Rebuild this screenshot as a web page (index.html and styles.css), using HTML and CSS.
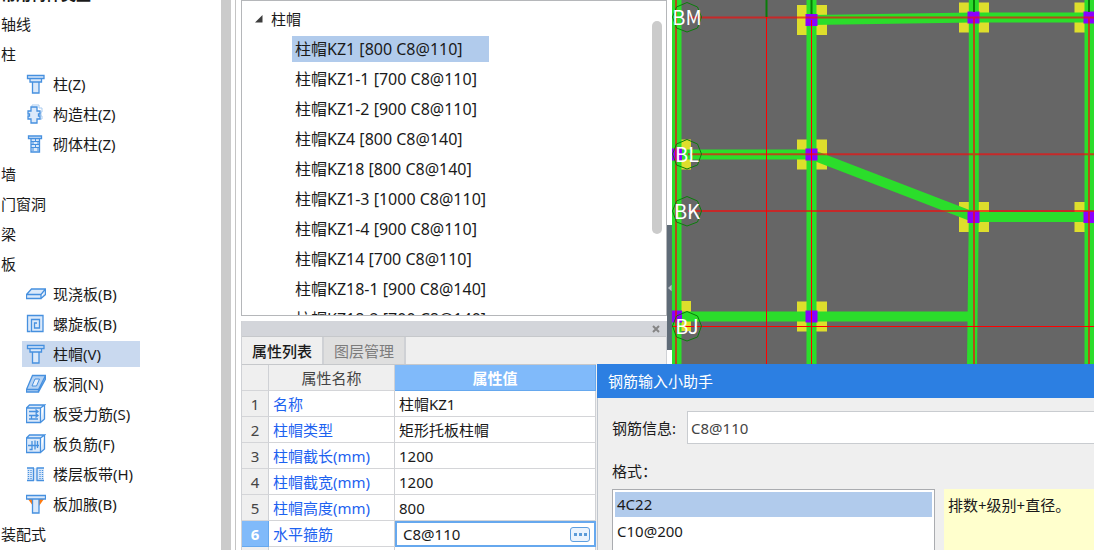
FILE: index.html
```html
<!DOCTYPE html>
<html lang="zh-CN">
<head>
<meta charset="utf-8">
<meta name="viewport" content="width=device-width, initial-scale=1">
<title>柱帽</title>
<link rel="stylesheet" href="styles.css">
</head>
<body>
<svg class="defs" aria-hidden="true">
  <symbol id="i-column" viewBox="0 0 20 20">
    <path class="tint line" d="M1.500 1.500h16.500v3H1.500zM4 4.500h11.500v3.500H4zM6.500 8h6.500v11H6.500z"/>
  </symbol>
  <symbol id="i-struct" viewBox="0 0 20 20">
    <path class="soft" d="M6 2.500V1h7v3h3v4h-1v4h1v3h-2"/>
    <path class="tint line" d="M5 3h6v4h3v3h-1.500v2H14v3h-3v4H5v-4H2v-3h1.500v-2H2V7h3z"/>
  </symbol>
  <symbol id="i-brick" viewBox="0 0 20 20">
    <path class="tint line" d="M2.500 2h13v2.500H2.500zM5 4.500h8.500v13.500H5z"/>
    <path class="line thin" d="M5 7.500h9M5 10.500h9M5 13.500h9M9.500 5v2M12 8v2M7 8v2M9.500 11v2M12 14v3M7 14v3"/>
  </symbol>
  <symbol id="i-slab" viewBox="0 0 20 20">
    <path class="tint line" d="M.5 10.500l5-5.500h14l-4.500 5.500zM.5 10.500v4H15v-4M15 14.500l4.500-4V5"/>
  </symbol>
  <symbol id="i-spiral" viewBox="0 0 20 20">
    <path class="tint" d="M2 2h15v15H2z"/>
    <path class="line" d="M4.500 17.500H1.500v-16h15.500v16H5.500V5.500h8v8.500h-5V9H11"/>
  </symbol>
  <symbol id="i-hole" viewBox="0 0 20 20">
    <path class="fill line" d="M6.500 1.500h13L12.500 15.500H.5zM.5 15.500v2.500h12v-2.500M12.500 18l7-13V1.500"/>
    <path class="hole" d="M9 5h4.500l-3 7H6z"/>
  </symbol>
  <symbol id="i-rebar" viewBox="0 0 20 20">
    <path class="tint line" d="M.5 4h14v14.500H.5zM.5 4l3-3h15l-4 3M18.500 1v14l-4 3.500"/>
    <path class="line" d="M3 7.500h9M3 11.500h9M3 15h9M9.500 5.500l2.500 2-2.500 2M9.500 9.500l2.500 2-2.500 2M5.500 11.500V15"/>
  </symbol>
  <symbol id="i-neg" viewBox="0 0 20 20">
    <path class="tint line" d="M.5 4h14v14.500H.5zM.5 4l3-3h15l-4 3M18.500 1v14l-4 3.500"/>
    <path class="line" d="M2 11.500h11M6 7v8.500H3.500M9 6.500v9M11.500 7v7"/>
  </symbol>
  <symbol id="i-band" viewBox="0 0 20 20">
    <path class="tint" d="M1 4h17v13H1z"/>
    <path class="line" d="M1 4h7M1 16.500h7M10.500 4H18M10.500 16.500H18M7.500 4v12.500M11 4v12.500"/>
    <path class="line dots" d="M2.500 6v9M5 6v9M14 6v9M16.500 6v9"/>
  </symbol>
  <symbol id="i-haunch" viewBox="0 0 20 20">
    <path class="orange" d="M2 5h16l-5 7H7z"/>
    <path class="tint line" d="M.5 1.500h19v3.500H.5zM6.500 5h6.500v14H6.500z"/>
  </symbol>
</svg>

<div class="app">
  <nav class="nav" aria-label="构件类型">
    <ul class="nav-list">
      <li class="group strong">常用构件类型</li>
      <li class="group">轴线</li>
      <li class="group">柱</li>
      <li><button class="item"><svg class="icon"><use href="#i-column"/></svg>柱(Z)</button></li>
      <li><button class="item"><svg class="icon"><use href="#i-struct"/></svg>构造柱(Z)</button></li>
      <li><button class="item"><svg class="icon"><use href="#i-brick"/></svg>砌体柱(Z)</button></li>
      <li class="group">墙</li>
      <li class="group">门窗洞</li>
      <li class="group">梁</li>
      <li class="group">板</li>
      <li><button class="item"><svg class="icon"><use href="#i-slab"/></svg>现浇板(B)</button></li>
      <li><button class="item"><svg class="icon"><use href="#i-spiral"/></svg>螺旋板(B)</button></li>
      <li><button class="item selected" aria-current="true"><svg class="icon"><use href="#i-column"/></svg>柱帽(V)</button></li>
      <li><button class="item"><svg class="icon"><use href="#i-hole"/></svg>板洞(N)</button></li>
      <li><button class="item"><svg class="icon"><use href="#i-rebar"/></svg>板受力筋(S)</button></li>
      <li><button class="item"><svg class="icon"><use href="#i-neg"/></svg>板负筋(F)</button></li>
      <li><button class="item"><svg class="icon"><use href="#i-band"/></svg>楼层板带(H)</button></li>
      <li><button class="item"><svg class="icon"><use href="#i-haunch"/></svg>板加腋(B)</button></li>
      <li class="group">装配式</li>
    </ul>
  </nav>
  <div class="nav-scroll"></div>

  <div class="middle">
    <section class="tree">
      <div class="tree-body">
        <button class="tree-root"><svg class="caret" viewBox="0 0 8 8"><path d="M7.500 0v7.500H0z"/></svg>柱帽</button>
        <ul class="tree-list">
          <li><button class="leaf selected">柱帽KZ1 [800 C8@110]</button></li>
          <li><button class="leaf">柱帽KZ1-1 [700 C8@110]</button></li>
          <li><button class="leaf">柱帽KZ1-2 [900 C8@110]</button></li>
          <li><button class="leaf">柱帽KZ4 [800 C8@140]</button></li>
          <li><button class="leaf">柱帽KZ18 [800 C8@140]</button></li>
          <li><button class="leaf">柱帽KZ1-3 [1000 C8@110]</button></li>
          <li><button class="leaf">柱帽KZ1-4 [900 C8@110]</button></li>
          <li><button class="leaf">柱帽KZ14 [700 C8@110]</button></li>
          <li><button class="leaf">柱帽KZ18-1 [900 C8@140]</button></li>
          <li><button class="leaf">柱帽KZ18-2 [700 C8@140]</button></li>
        </ul>
      </div>
      <div class="tree-scroll"><div class="thumb"></div></div>
    </section>

    <section class="props">
      <div class="props-bar">
        <button class="close" aria-label="关闭"><svg viewBox="0 0 8 8"><path d="M1 1l6 6M7 1L1 7"/></svg></button>
      </div>
      <div class="tabs" role="tablist">
        <button class="tab active" role="tab" aria-selected="true">属性列表</button>
        <button class="tab" role="tab" aria-selected="false">图层管理</button>
      </div>
      <table class="grid">
        <colgroup><col class="c-no"><col class="c-name"><col class="c-value"></colgroup>
        <thead><tr><th></th><th>属性名称</th><th class="on">属性值</th></tr></thead>
        <tbody>
          <tr><th>1</th><td class="name">名称</td><td>柱帽KZ1</td></tr>
          <tr><th>2</th><td class="name">柱帽类型</td><td>矩形托板柱帽</td></tr>
          <tr><th>3</th><td class="name">柱帽截长(mm)</td><td>1200</td></tr>
          <tr><th>4</th><td class="name">柱帽截宽(mm)</td><td>1200</td></tr>
          <tr><th>5</th><td class="name">柱帽高度(mm)</td><td>800</td></tr>
          <tr><th class="on">6</th><td class="name"><label for="stirrup">水平箍筋</label></td>
            <td class="edit"><div class="editor"><input id="stirrup" value="C8@110"><button class="more" aria-label="更多"><i></i><i></i><i></i></button></div></td></tr>
          <tr><th></th><td></td><td></td></tr>
        </tbody>
      </table>
    </section>
  </div>

  <div class="splitter"><button class="handle" aria-label="折叠"><svg viewBox="0 0 5 8"><path d="M4.500 0v8L0 4z"/></svg></button></div>

  <main class="canvas">
    <svg class="plan" role="img" aria-label="结构平面图">
      <g transform="translate(-672 0)">
        <g class="pads">
          <path d="M797 5h30v30h-30zM959 2.500h30v30h-30zM1074.500 2.500h30v30h-30zM797 139.500h30v30h-30zM959 202h30v30h-30zM1074.500 202h30v30h-30zM797 301.500h30v30h-30zM661 139.500h30v30h-30zM661 301h30v30h-30z"/>
        </g>
        <g class="beams">
          <path d="M676.500 0V364M811.500 0V364M973.800 0V217L972 364M1089.500 0V364"/>
          <path d="M811.500 20L973.500 17.500H1104M676 154.500H811.500L973.500 217H1104M676 316.500H970"/>
        </g>
        <g class="blocks">
          <path d="M805.500 14h12v12h-12zM967.500 11.500h12v12h-12zM1083.500 11.500h12v12h-12zM805.500 148.500h12v12h-12zM967.500 211h12v12h-12zM1083.500 211h12v12h-12zM805.500 310.500h12v12h-12zM670 148.500h12v12h-12zM670 310.500h12v12h-12z"/>
        </g>
        <g class="axis-soft">
          <path d="M676 0V364M974 17V364M1089 17V364M688 17.500H2400M688 154.300H2400M688 211H2400"/>
        </g>
        <g class="axis"><path d="M766.500 17V364M811.500 20V364M672 326.500H2400"/></g>
        <g class="axis-end"><path d="M766.500 0V17M811.500 0V14M974 0V12M1089 0V12"/></g>
        <g class="bubbles">
          <path id="bubble" d="M687 2.500L697.500 7L701.500 17L697.500 28L687 32L676.500 28L672.500 17L676.500 7z"/>
          <use href="#bubble" y="137"/><use href="#bubble" y="194"/><use href="#bubble" y="309"/>
        </g>
        <g class="marks">
          <text x="687" y="25">BM</text><text x="687" y="162">BL</text><text x="687" y="219">BK</text><text x="687" y="334">BJ</text>
        </g>
      </g>
    </svg>
  </main>

  <section class="dialog" role="dialog" aria-labelledby="dlg-title">
    <h2 class="dialog-title" id="dlg-title">钢筋输入小助手</h2>
    <div class="dialog-body">
      <div class="field"><label for="rebar">钢筋信息:</label><input id="rebar" value="C8@110"></div>
      <div class="format" id="fmt">格式：</div>
      <div class="choices">
        <ul class="options" role="listbox" aria-labelledby="fmt">
          <li class="option selected" role="option" aria-selected="true">4C22</li>
          <li class="option" role="option" aria-selected="false">C10@200</li>
        </ul>
        <div class="hint">排数+级别+直径。</div>
      </div>
    </div>
  </section>
</div>
</body>
</html>
```
FILE: styles.css
```css
* { box-sizing: border-box; }
html, body { height: 100%; }
body {
  margin: 0;
  overflow: hidden;
  background: #fff;
  color: #1a1a1a;
  font: 15px/20px "Noto Sans", "Noto Sans CJK SC", sans-serif;
}
button, input { font: inherit; color: inherit; margin: 0; padding: 0; border: 0; background: none; }
button { text-align: left; white-space: nowrap; }
ul { list-style: none; margin: 0; padding: 0; }
.defs { position: absolute; width: 0; height: 0; }

.app {
  position: relative;
  display: grid;
  grid-template-columns: 221px 10px 436px 5px minmax(0, 1fr);
  height: 100%;
  overflow: hidden;
}

/* component navigation */
.nav { overflow: hidden; }
.nav-list { margin-top: -21px; }
.nav-list li { height: 30px; padding: 2px 0 2px 22px; }
.nav-list .group { padding: 5px 0 5px 1px; }
.nav-list .strong { font-weight: 700; }
.item { display: flex; align-items: center; gap: 7px; width: 118px; height: 26px; padding-left: 4px; }
.nav .selected { background: #c9d9ef; }
.icon { width: 20px; height: 20px; }
.tint { fill: #dbe9fa; }
.line { stroke: #4690df; stroke-width: 1.3; }
.line:not(.tint):not(.fill) { fill: none; }
.thin { stroke-width: 1; }
.fill { fill: #b5d2f3; }
.soft { fill: none; stroke: #a9cbf0; }
.hole { fill: #e8f1fc; stroke: #4690df; }
.dots { stroke-dasharray: 1 1; }
.orange { fill: #ff7a0f; }
.nav-scroll { background: #cbcbcb; }

/* middle column */
.middle {
  display: grid;
  grid-template-rows: 316px minmax(0, 1fr);
  row-gap: 5px;
  min-height: 0;
  margin-left: 4px;
  padding-left: 5px;
  border-left: 1px solid #c4c4c4;
}
.tree { display: flex; border: 1px solid #b5b7ba; overflow: hidden; }
.tree-body { flex: 1; padding-top: 3px; }
.tree-root { display: flex; align-items: center; gap: 8px; height: 30px; padding-left: 13px; }
.caret { width: 8px; height: 8px; fill: #3d3d3d; }
.tree-list { padding-left: 50px; }
.tree-list li { height: 30px; padding: 2px 0; }
.leaf { display: block; width: 197px; height: 26px; padding-left: 3px; font-size: 16px; }
.tree .selected { background: #b1cbec; }
.tree-scroll { width: 14px; padding-top: 20px; }
.thumb { width: 10px; height: 213px; border-radius: 5px; background: #cbcbcb; }

.props { background: #efefef; border-left: 1px solid #cfd1d5; border-right: 1px solid #cfd1d5; overflow: hidden; }
.props-bar { display: flex; justify-content: flex-end; align-items: center; height: 16px; padding-right: 6px; background: #d3d5da; border-bottom: 1px solid #c6c8cb; }
.close { display: flex; }
.close svg { width: 8px; height: 8px; stroke: #858585; stroke-width: 2; }
.tabs { display: flex; height: 27px; }
.tab { padding: 0 10px; background: #dfdfdf; border-right: 2px solid #cfd1d5; color: #7c7c7c; }
.tab.active { background: #efefef; color: #1a1a1a; font-weight: 500; }

.grid { width: 354px; table-layout: fixed; border-collapse: separate; border-spacing: 0; background: #fff; border-top: 1px solid #c6c8cb; }
.c-no { width: 27px; }
.c-name { width: 126px; }
.c-value { width: 201px; }
.grid th, .grid td { height: 26px; padding: 0 4px; border-right: 1px solid #cfd1d5; border-bottom: 1px solid #d4d5d8; text-align: left; font-weight: 400; white-space: nowrap; }
.grid th { padding: 0; background: #efefef; color: #444; text-align: center; }
.grid .on { background: #80bafa; color: #fff; font-weight: 700; border-color: #66a8ee; }
.grid .name { color: #1d62f0; }
.grid .edit { padding: 0; border: 2px solid #66a8ee; }
.editor { display: flex; align-items: center; padding: 0 4px 0 6px; }
.editor input { flex: 1; min-width: 0; height: 22px; outline: 0; }
.more { display: flex; align-items: center; justify-content: center; gap: 2px; width: 20px; height: 15px; border: 1px solid #5e9fe0; border-radius: 3px; background: #eaf3fd; }
.more i { width: 3px; height: 3px; background: #5b9bd8; }

/* panel splitter */
.splitter { padding-top: 225px; }
.handle { display: flex; align-items: center; justify-content: flex-end; width: 5px; height: 125px; background: #5f6b77; }
.handle svg { width: 4px; height: 8px; fill: #b9c0c6; }

/* structural plan */
.canvas { min-width: 0; min-height: 0; background: #666; overflow: hidden; }
.plan { display: block; width: 100%; height: 100%; }
.pads { fill: #dede2c; }
.beams { fill: none; stroke: #2bdd2b; stroke-width: 10; }
.blocks { fill: #8b00ff; }
.axis-soft { stroke: #f01010; stroke-opacity: .7; stroke-width: 2; }
.axis { stroke: #f00; }
.axis-end { stroke: #087d08; stroke-width: 2; }
.bubbles { fill: none; stroke: #0b7d0b; }
.marks { fill: #fff; font: 400 20px "Noto Sans CJK SC", sans-serif; text-anchor: middle; }

/* floating input helper */
.dialog { position: absolute; left: 597px; right: 0; top: 364px; bottom: 0; display: flex; flex-direction: column; background: #efefef; border-left: 1px solid #c0c6ce; }
.dialog-title { margin: 0 0 0 -1px; padding: 7px 11px; height: 34px; background: #2c7fe2; color: #fff; font-size: 15px; font-weight: 400; }
.dialog-body { flex: 1; display: flex; flex-direction: column; min-height: 0; padding: 13px 0 0 14px; }
.field { display: flex; align-items: center; }
.field label { width: 75px; }
.field input { flex: 1; min-width: 0; height: 33px; padding: 0 3px; border: 1px solid #c9ccd0; border-right: 0; background: #fff; color: #444; outline: 0; }
.format { padding: 17px 0 8px; }
.choices { flex: 1; display: flex; gap: 9px; min-height: 0; }
.options { flex: 0 1 323px; padding: 2px; border: 1px solid #aaacb0; border-bottom: 0; background: #fff; }
.option { height: 28px; padding: 2px; }
.dialog .selected { height: 25px; margin-bottom: 2px; background: #b1cbec; }
.hint { flex: 1; padding: 6px 4px; background: #ffffcd; }
```
